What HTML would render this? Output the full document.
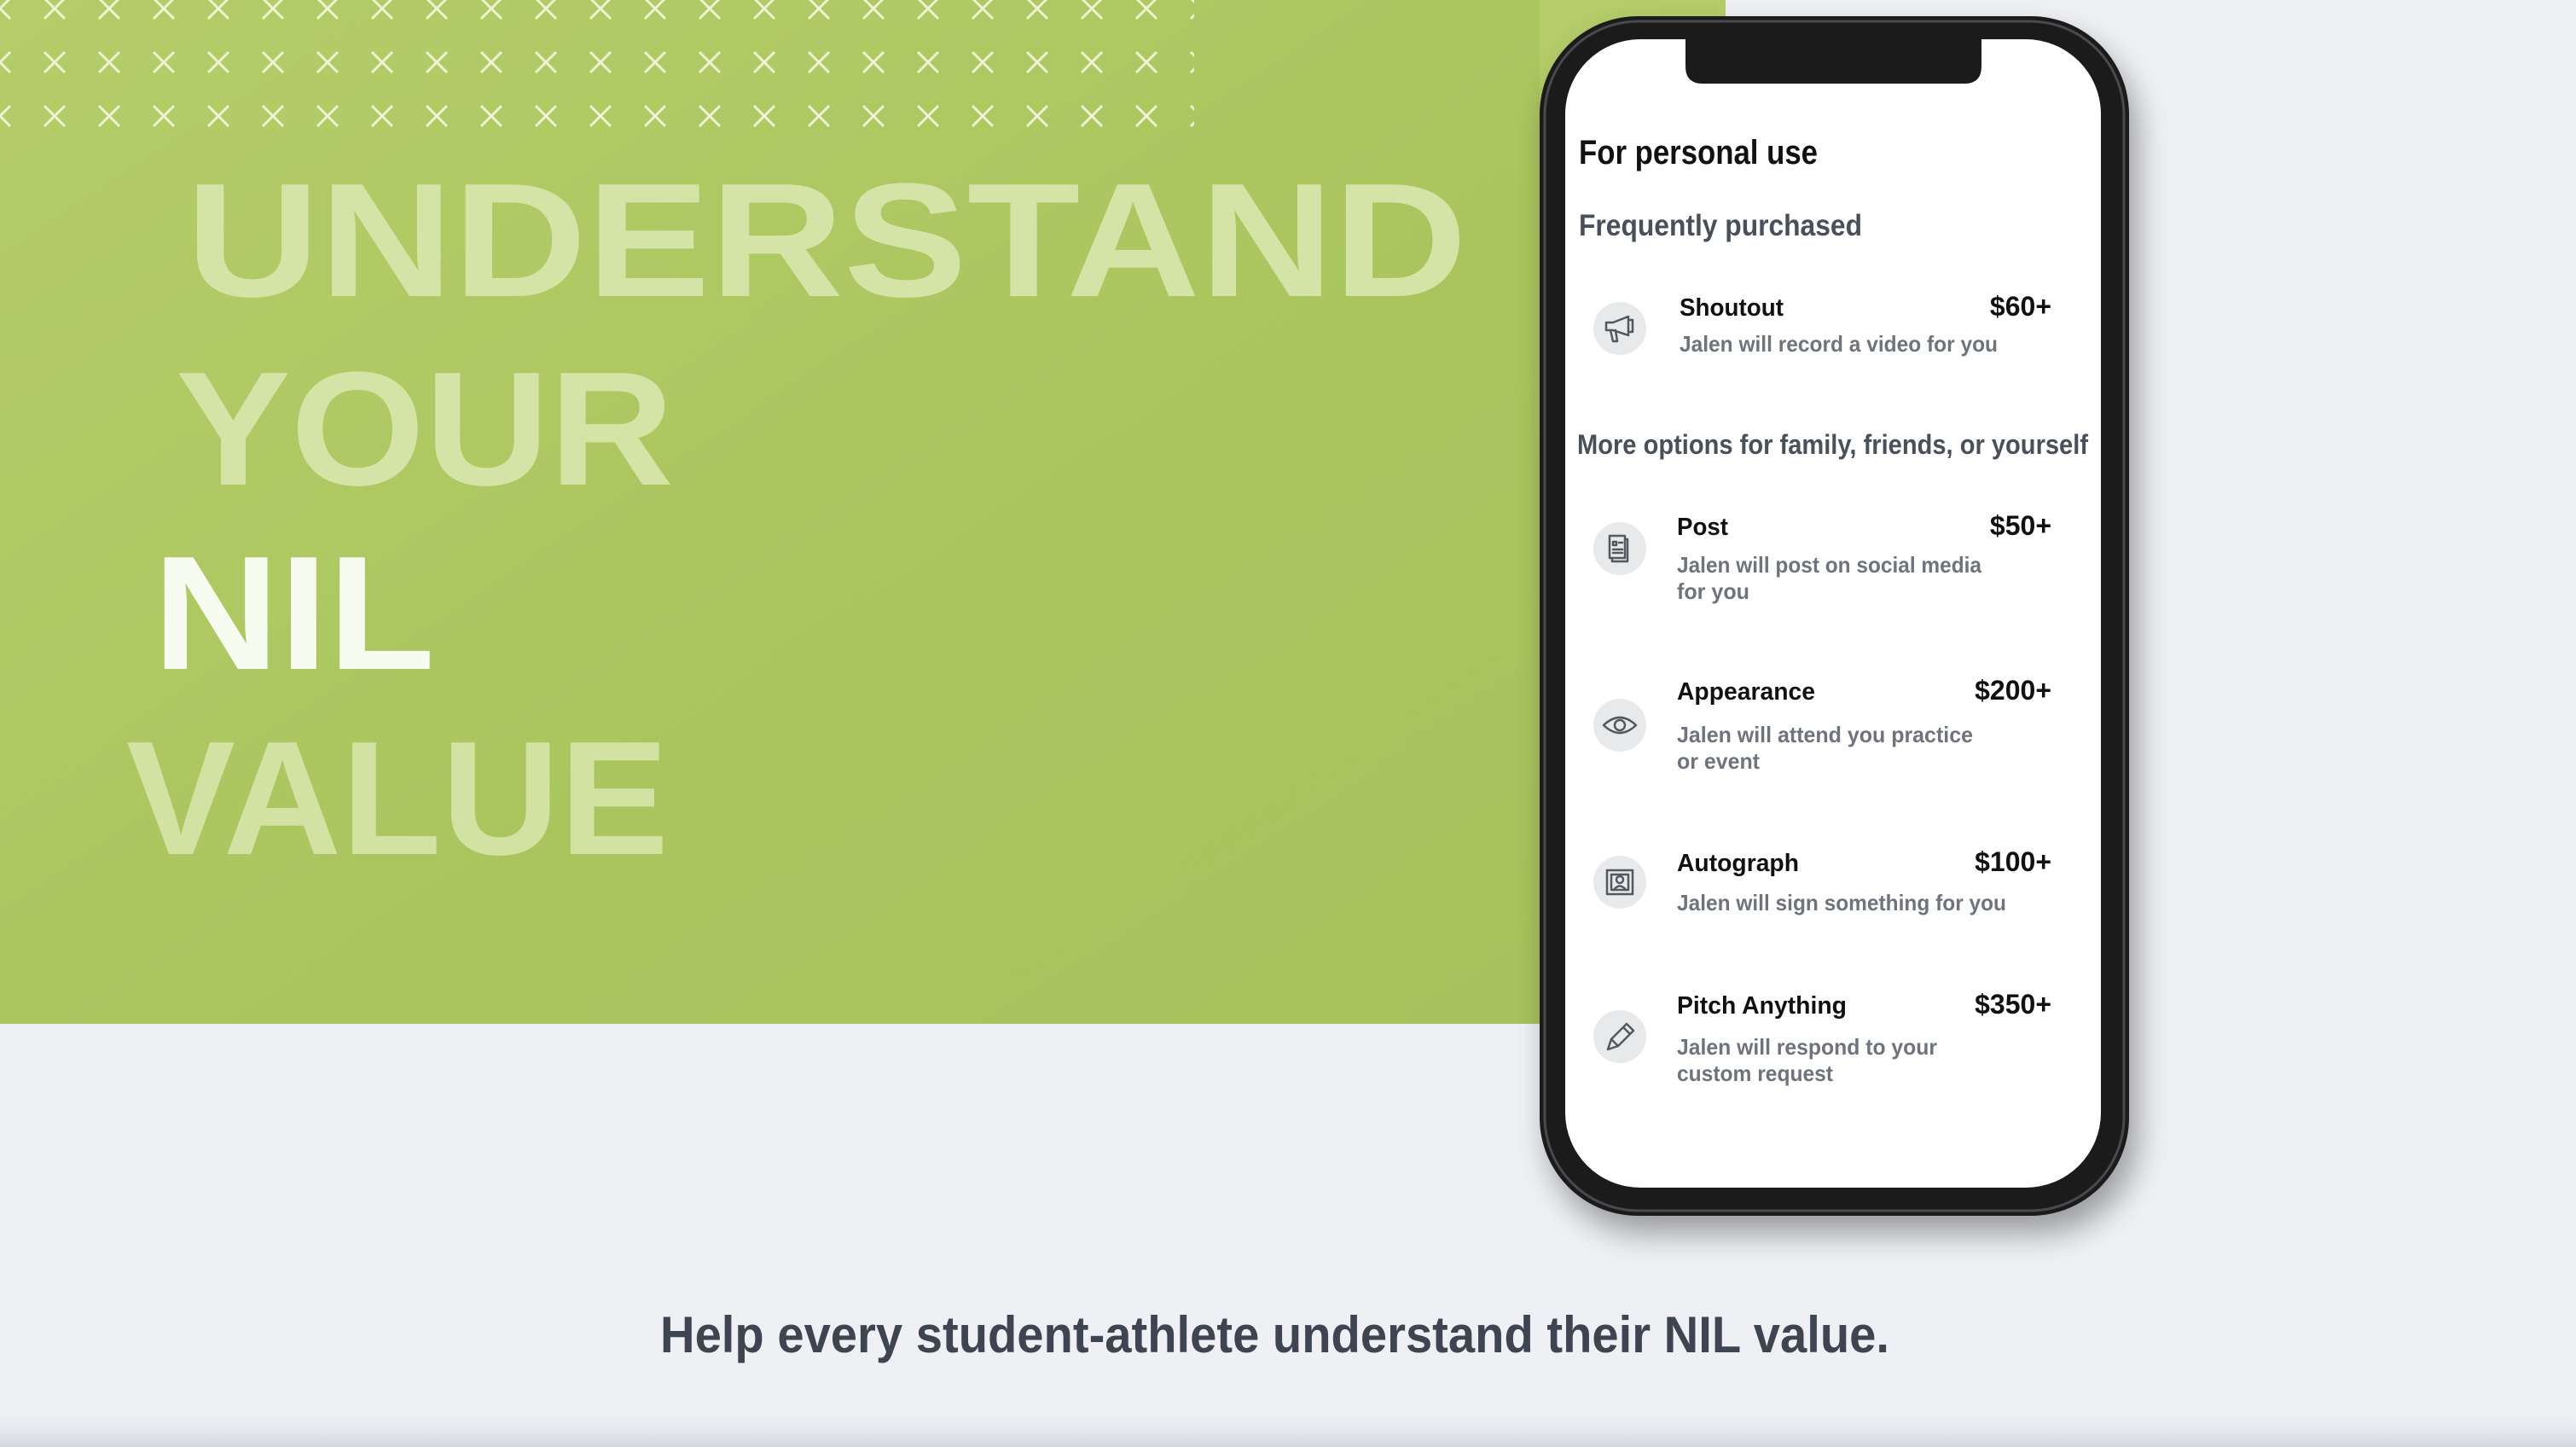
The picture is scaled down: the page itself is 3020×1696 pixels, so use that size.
<!DOCTYPE html>
<html><head><meta charset="utf-8"><style>
html,body{margin:0;padding:0;background:#eef0f4;}
svg{display:block}
text{font-family:"Liberation Sans",sans-serif}
</style></head><body>
<svg width="3020" height="1696" viewBox="0 0 3020 1696" xmlns="http://www.w3.org/2000/svg">
<defs>
<pattern id="xp" x="-32" y="-21" width="64" height="63" patternUnits="userSpaceOnUse">
<path d="M20 19 L44 43 M44 19 L20 43" stroke="#eef4d2" stroke-width="3" fill="none"/>
</pattern>
<linearGradient id="bot" x1="0" y1="0" x2="0" y2="1">
<stop offset="0" stop-color="#eef0f4" stop-opacity="0"/><stop offset="1" stop-color="#d3d6db"/>
</linearGradient>
<linearGradient id="gr" x1="0" y1="0" x2="1" y2="1">
<stop offset="0" stop-color="#b4cd69"/><stop offset="0.6" stop-color="#aac55e"/><stop offset="1" stop-color="#a7c25c"/>
</linearGradient>
<filter id="sh" x="-20%" y="-20%" width="140%" height="140%"><feGaussianBlur stdDeviation="18"/></filter>
</defs>
<rect width="3020" height="1696" fill="#eef0f4"/>
<rect x="0" y="1650" width="3020" height="46" fill="url(#bot)"/>
<rect x="0" y="0" width="2023" height="300" fill="#b4cd69"/>
<rect x="0" y="0" width="1805" height="1200" fill="url(#gr)"/>
<rect x="0" y="0" width="1400" height="160" fill="url(#xp)"/>
<!-- headline -->
<g font-weight="bold" font-size="190">
<text x="218" y="347" textLength="1502" lengthAdjust="spacingAndGlyphs" fill="#d4e4a7">UNDERSTAND</text>
<text x="206" y="568" textLength="584" lengthAdjust="spacingAndGlyphs" fill="#d4e4a7">YOUR</text>
<text x="179" y="784" textLength="331" lengthAdjust="spacingAndGlyphs" fill="#f8fbef">NIL</text>
<text x="148" y="1001" textLength="636" lengthAdjust="spacingAndGlyphs" fill="#d2e2a3">VALUE</text>
</g>
<!-- phone -->
<rect x="1815" y="40" width="691" height="1406" rx="115" fill="#000" opacity="0.35" filter="url(#sh)"/>
<rect x="1805" y="19" width="691" height="1406" rx="115" fill="#1b1b1c"/>
<rect x="1811" y="25" width="679" height="1394" rx="110" fill="none" stroke="#4a4a4c" stroke-width="3"/>
<rect x="1835" y="46" width="628" height="1346" rx="88" fill="#fff"/>
<path d="M1976 46 H2323 V78 Q2323 98 2303 98 H1996 Q1976 98 1976 78 Z" fill="#1b1b1c"/>
<g font-weight="bold">
<text x="1851" y="192" font-size="40" fill="#111" textLength="280" lengthAdjust="spacingAndGlyphs">For personal use</text>
<text x="1851" y="276" font-size="35" fill="#4a505a" textLength="332" lengthAdjust="spacingAndGlyphs">Frequently purchased</text>
<text x="1849" y="532" font-size="32" fill="#4a505a" textLength="599" lengthAdjust="spacingAndGlyphs">More options for family, friends, or yourself</text>
</g>
<g fill="#e8e9eb">
<circle cx="1899" cy="385" r="31"/><circle cx="1899" cy="643" r="31"/><circle cx="1899" cy="850" r="31"/><circle cx="1899" cy="1034" r="31"/><circle cx="1899" cy="1215" r="31"/>
</g>
<g fill="none" stroke="#55595f" stroke-width="2.5" stroke-linejoin="round" stroke-linecap="round">
<path d="M1883 378 H1891 L1909 371 V393 L1891 387 H1883 Z M1909 375 h5 v14 h-5 M1888 387 L1891 400 H1896 L1894 387"/>
<path d="M1887 628 h18 v26 h-18 z M1891 635 h4 v4 h-4 z M1898 636 h4 M1891 644 h11 M1891 648 h11 M1905 632 h3 v26 h-18 v-4"/>
<path d="M1880 850 Q1899 832 1918 850 Q1899 868 1880 850 Z"/><circle cx="1899" cy="850" r="6"/>
<path d="M1884 1020 h30 v28 h-30 z M1889 1025 h20 v18 h-20 z"/><circle cx="1899" cy="1031" r="4"/><path d="M1892 1043 q7 -9 14 0"/>
<path d="M1885 1230 L1889 1218 L1907 1200 L1915 1208 L1897 1226 Z M1889 1218 L1897 1226 M1903 1204 L1911 1212"/>
</g>
<g font-weight="bold" fill="#111" font-size="29">
<text x="1969" y="370" textLength="122" lengthAdjust="spacingAndGlyphs">Shoutout</text>
<text x="1966" y="627" textLength="60" lengthAdjust="spacingAndGlyphs">Post</text>
<text x="1966" y="820" textLength="162" lengthAdjust="spacingAndGlyphs">Appearance</text>
<text x="1966" y="1021" textLength="143" lengthAdjust="spacingAndGlyphs">Autograph</text>
<text x="1966" y="1188" textLength="199" lengthAdjust="spacingAndGlyphs">Pitch Anything</text>
</g>
<g font-weight="bold" fill="#111" font-size="32" text-anchor="end">
<text x="2405" y="370">$60+</text>
<text x="2405" y="627">$50+</text>
<text x="2405" y="820">$200+</text>
<text x="2405" y="1021">$100+</text>
<text x="2405" y="1188">$350+</text>
</g>
<g font-weight="bold" fill="#6e737c" font-size="26">
<text x="1969" y="412" textLength="373" lengthAdjust="spacingAndGlyphs">Jalen will record a video for you</text>
<text x="1966" y="671" textLength="357" lengthAdjust="spacingAndGlyphs">Jalen will post on social media</text>
<text x="1966" y="702" textLength="85" lengthAdjust="spacingAndGlyphs">for you</text>
<text x="1966" y="870" textLength="347" lengthAdjust="spacingAndGlyphs">Jalen will attend you practice</text>
<text x="1966" y="901" textLength="97" lengthAdjust="spacingAndGlyphs">or event</text>
<text x="1966" y="1067" textLength="386" lengthAdjust="spacingAndGlyphs">Jalen will sign something for you</text>
<text x="1966" y="1236" textLength="305" lengthAdjust="spacingAndGlyphs">Jalen will respond to your</text>
<text x="1966" y="1267" textLength="183" lengthAdjust="spacingAndGlyphs">custom request</text>
</g>
<text x="774" y="1585" font-size="60" font-weight="bold" fill="#3e4551" textLength="1441" lengthAdjust="spacingAndGlyphs">Help every student-athlete understand their NIL value.</text>
</svg>
</body></html>
